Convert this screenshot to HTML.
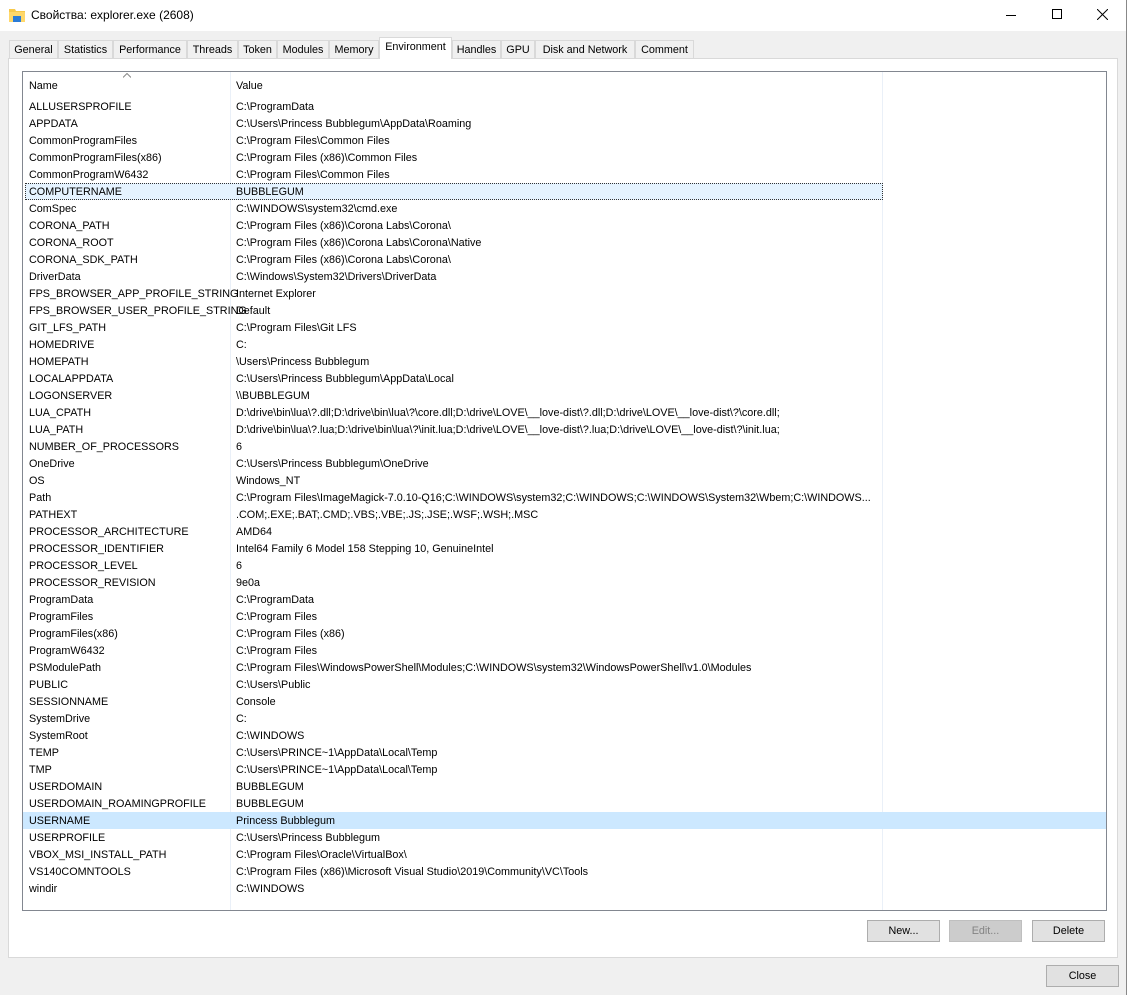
<!DOCTYPE html>
<html><head><meta charset="utf-8"><style>
*{margin:0;padding:0;box-sizing:border-box}
body{width:1127px;height:995px;background:#f0f0f0;font-family:"Liberation Sans",sans-serif;font-size:10.8px;color:#000;position:relative;overflow:hidden}
.title{position:absolute;left:0;top:0;width:1127px;height:31px;background:#fff}
.title .t{position:absolute;left:31px;top:8px;font-size:12px}
.win{position:absolute;right:0;top:0;width:1px;height:995px;background:#888}
.tabs{position:absolute;top:40px;left:9px;height:18px}
.tab{position:absolute;top:0;height:18px;border:1px solid #d9d9d9;border-bottom:none;background:#f0f0f0;padding:3px 0 0 0;text-align:center;font-size:10.8px}
.tab.sel{top:-3px;height:22px;background:#fff;z-index:2;padding-top:3px}
.panel{position:absolute;left:8px;top:58px;width:1110px;height:900px;background:#fff;border:1px solid #d9d9d9}
.list{position:absolute;left:22px;top:71px;width:1085px;height:840px;border:1px solid #828790;background:#fff;overflow:hidden}
.hdr{position:absolute;left:0;top:0;height:25px;width:100%}
.hdr span{position:absolute;top:8px}
.vl{position:absolute;top:0;width:1px;height:840px;background:#eaf0f8}
.row{position:absolute;left:0;height:17px;width:100%;}
.row span{position:absolute;top:3px;white-space:nowrap}
.row .n{left:6px}.row .v{left:213px}
.btn{position:absolute;height:22px;border:1px solid #adadad;background:#e1e1e1;text-align:center;line-height:21px;font-size:10.8px}
</style></head><body>
<div class="title">
<svg style="position:absolute;left:9px;top:8px" width="16" height="14" viewBox="0 0 16 14"><path d="M0 1h6l1 2h9v11H0z" fill="#f7c94b"/><rect x="0" y="4" width="16" height="10" fill="#ffd86b"/><rect x="4" y="8" width="8" height="6" fill="#2b7bd6"/></svg>
<div class="t">Свойства: explorer.exe (2608)</div>
<div style="position:absolute;left:1006px;top:15px;width:10px;height:1px;background:#000"></div>
<div style="position:absolute;left:1052px;top:9px;width:10px;height:10px;border:1px solid #000"></div>
<svg style="position:absolute;left:1097px;top:9px" width="11" height="11"><path d="M0 0L11 11M11 0L0 11" stroke="#000" stroke-width="1"/></svg>
</div>
<div class="win"></div>
<div class="panel"></div>
<div class="tabs">
<div class="tab" style="left:0;width:49px">General</div>
<div class="tab" style="left:49px;width:55px">Statistics</div>
<div class="tab" style="left:104px;width:74px">Performance</div>
<div class="tab" style="left:178px;width:51px">Threads</div>
<div class="tab" style="left:229px;width:39px">Token</div>
<div class="tab" style="left:268px;width:52px">Modules</div>
<div class="tab" style="left:320px;width:50px">Memory</div>
<div class="tab sel" style="left:370px;width:73px">Environment</div>
<div class="tab" style="left:443px;width:49px">Handles</div>
<div class="tab" style="left:492px;width:34px">GPU</div>
<div class="tab" style="left:526px;width:100px">Disk and Network</div>
<div class="tab" style="left:626px;width:59px">Comment</div>
</div>
<div class="list">
<div class="vl" style="left:207px"></div><div class="vl" style="left:859px"></div>
<div class="hdr"><span style="left:6px">Name</span><span style="left:213px">Value</span>
<svg style="position:absolute;left:100px;top:1px" width="8" height="5"><path d="M0 4.5L4 .5L8 4.5" fill="none" stroke="#888"/></svg></div>
<div id="rows"></div>
</div>
<div class="btn" style="left:867px;top:920px;width:73px">New...</div>
<div class="btn" style="left:949px;top:920px;width:73px;background:#cccccc;border-color:#bfbfbf;color:#838383">Edit...</div>
<div class="btn" style="left:1032px;top:920px;width:73px">Delete</div>
<div class="btn" style="left:1046px;top:965px;width:73px">Close</div>
<script>
var d=[["ALLUSERSPROFILE","C:\\ProgramData"],["APPDATA","C:\\Users\\Princess Bubblegum\\AppData\\Roaming"],["CommonProgramFiles","C:\\Program Files\\Common Files"],["CommonProgramFiles(x86)","C:\\Program Files (x86)\\Common Files"],["CommonProgramW6432","C:\\Program Files\\Common Files"],["COMPUTERNAME","BUBBLEGUM"],["ComSpec","C:\\WINDOWS\\system32\\cmd.exe"],["CORONA_PATH","C:\\Program Files (x86)\\Corona Labs\\Corona\\"],["CORONA_ROOT","C:\\Program Files (x86)\\Corona Labs\\Corona\\Native"],["CORONA_SDK_PATH","C:\\Program Files (x86)\\Corona Labs\\Corona\\"],["DriverData","C:\\Windows\\System32\\Drivers\\DriverData"],["FPS_BROWSER_APP_PROFILE_STRING","Internet Explorer"],["FPS_BROWSER_USER_PROFILE_STRING","Default"],["GIT_LFS_PATH","C:\\Program Files\\Git LFS"],["HOMEDRIVE","C:"],["HOMEPATH","\\Users\\Princess Bubblegum"],["LOCALAPPDATA","C:\\Users\\Princess Bubblegum\\AppData\\Local"],["LOGONSERVER","\\\\BUBBLEGUM"],["LUA_CPATH","D:\\drive\\bin\\lua\\?.dll;D:\\drive\\bin\\lua\\?\\core.dll;D:\\drive\\LOVE\\__love-dist\\?.dll;D:\\drive\\LOVE\\__love-dist\\?\\core.dll;"],["LUA_PATH","D:\\drive\\bin\\lua\\?.lua;D:\\drive\\bin\\lua\\?\\init.lua;D:\\drive\\LOVE\\__love-dist\\?.lua;D:\\drive\\LOVE\\__love-dist\\?\\init.lua;"],["NUMBER_OF_PROCESSORS","6"],["OneDrive","C:\\Users\\Princess Bubblegum\\OneDrive"],["OS","Windows_NT"],["Path","C:\\Program Files\\ImageMagick-7.0.10-Q16;C:\\WINDOWS\\system32;C:\\WINDOWS;C:\\WINDOWS\\System32\\Wbem;C:\\WINDOWS..."],["PATHEXT",".COM;.EXE;.BAT;.CMD;.VBS;.VBE;.JS;.JSE;.WSF;.WSH;.MSC"],["PROCESSOR_ARCHITECTURE","AMD64"],["PROCESSOR_IDENTIFIER","Intel64 Family 6 Model 158 Stepping 10, GenuineIntel"],["PROCESSOR_LEVEL","6"],["PROCESSOR_REVISION","9e0a"],["ProgramData","C:\\ProgramData"],["ProgramFiles","C:\\Program Files"],["ProgramFiles(x86)","C:\\Program Files (x86)"],["ProgramW6432","C:\\Program Files"],["PSModulePath","C:\\Program Files\\WindowsPowerShell\\Modules;C:\\WINDOWS\\system32\\WindowsPowerShell\\v1.0\\Modules"],["PUBLIC","C:\\Users\\Public"],["SESSIONNAME","Console"],["SystemDrive","C:"],["SystemRoot","C:\\WINDOWS"],["TEMP","C:\\Users\\PRINCE~1\\AppData\\Local\\Temp"],["TMP","C:\\Users\\PRINCE~1\\AppData\\Local\\Temp"],["USERDOMAIN","BUBBLEGUM"],["USERDOMAIN_ROAMINGPROFILE","BUBBLEGUM"],["USERNAME","Princess Bubblegum"],["USERPROFILE","C:\\Users\\Princess Bubblegum"],["VBOX_MSI_INSTALL_PATH","C:\\Program Files\\Oracle\\VirtualBox\\"],["VS140COMNTOOLS","C:\\Program Files (x86)\\Microsoft Visual Studio\\2019\\Community\\VC\\Tools"],["windir","C:\\WINDOWS"]];
var h="";
d.forEach(function(r,i){var top=26+i*17;var st="";
if(r[0]=="USERNAME")st="background:#cce8ff;";
if(r[0]=="COMPUTERNAME")st="background:#e5f3ff;outline:1px dotted #333;outline-offset:-1px;left:2px;width:858px;";
h+='<div class="row" style="top:'+top+'px;'+st+'"><span class="n"'+(r[0]=="COMPUTERNAME"?' style="left:4px"':'')+'>'+r[0]+'</span><span class="v"'+(r[0]=="COMPUTERNAME"?' style="left:211px"':'')+'>'+r[1].replace(/&/g,"&amp;")+'</span></div>';});
document.getElementById("rows").innerHTML=h;
</script>
</body></html>
